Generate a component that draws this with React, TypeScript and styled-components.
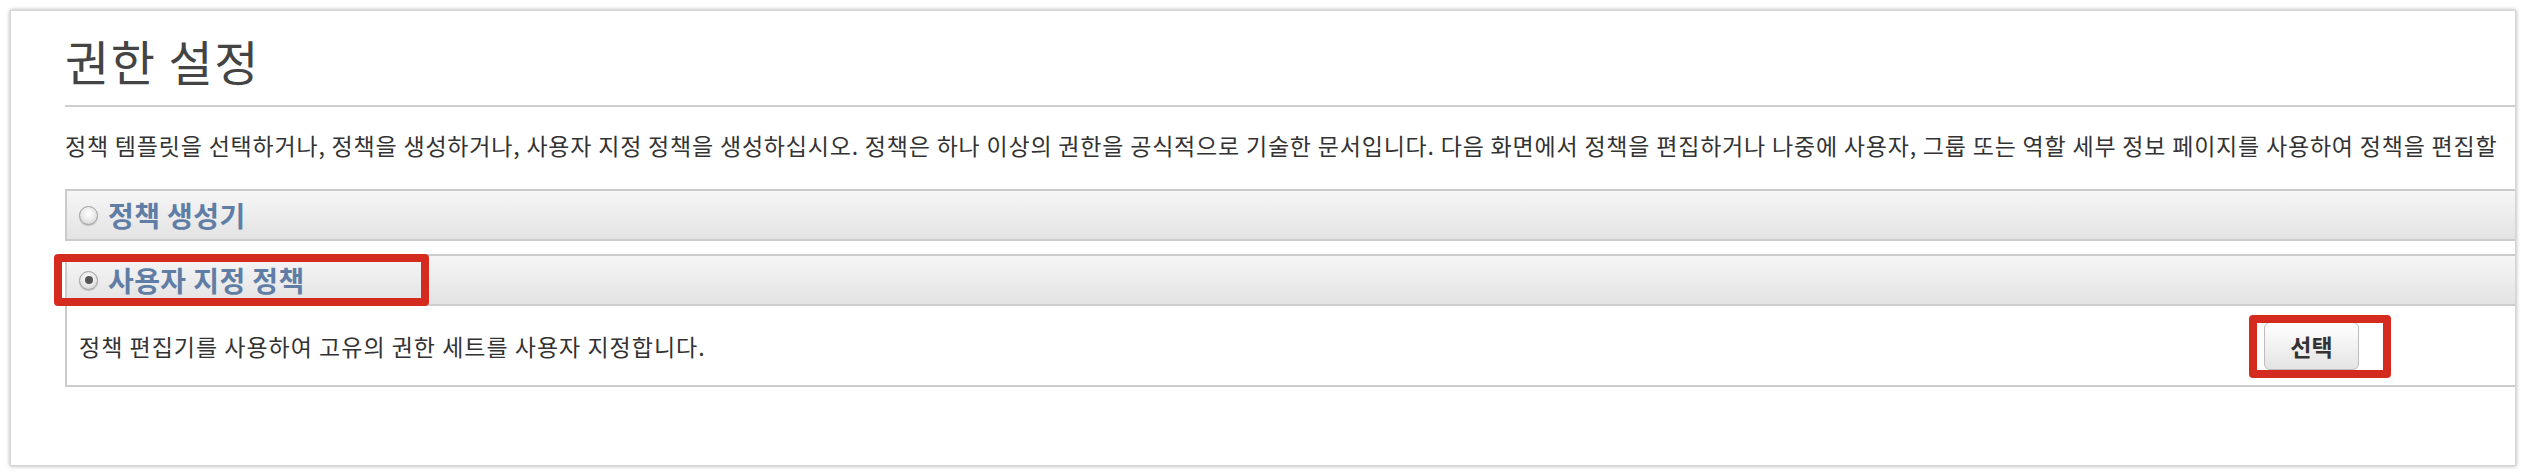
import React from "react";
import styled, { createGlobalStyle } from "styled-components";

const Global = createGlobalStyle`
  html, body { margin: 0; padding: 0; background: #ffffff; }
  body { font-family: "Noto Sans CJK KR", "Noto Sans", sans-serif; }
`;

const Card = styled.div`
  box-sizing: border-box;
  margin: 10px 8px 10px 10px;
  height: 456px;
  border: 1px solid #d6d6d6;
  box-shadow: 0 0 4px rgba(0, 0, 0, 0.35);
  background: #fff;
  padding: 0 0 0 54px;
  overflow: hidden;
  display: flex;
  flex-direction: column;
`;

const Title = styled.h1`
  margin: 23px 0 0 0;
  font-size: 48px;
  line-height: 52px;
  font-weight: 400;
  color: #444;
  letter-spacing: 1.5px;
`;

const Rule = styled.div`
  height: 2px;
  background: #cfcfcf;
  margin-top: 19px;
`;

const Description = styled.p`
  margin: 23px 0 0 0;
  font-size: 23px;
  line-height: 30px;
  color: #333;
  white-space: nowrap;
  letter-spacing: 0.8px;
`;

const Section = styled.div<{ $gap?: number }>`
  border: 2px solid #cbcbcb;
  margin-right: -10px;
  margin-top: ${(p) => p.$gap ?? 0}px;
  background: #fff;
`;

const Header = styled.div<{ $divider?: boolean }>`
  position: relative;
  height: 48px;
  display: flex;
  align-items: center;
  gap: 10px;
  padding-left: 12px;
  background: linear-gradient(#f6f6f6, #e3e3e3);
  border-bottom: ${(p) => (p.$divider ? "2px solid #cdcdcd" : "none")};
`;

const Radio = styled.span<{ $checked?: boolean }>`
  box-sizing: border-box;
  width: 19px;
  height: 19px;
  border-radius: 50%;
  border: 1px solid #a0a0a0;
  background: radial-gradient(circle at 50% 40%, #ffffff 0%, #ececec 45%, #cccccc 100%);
  box-shadow: 0 1px 1px rgba(0, 0, 0, 0.2);
  display: flex;
  align-items: center;
  justify-content: center;
  flex: none;
  &::after {
    content: "";
    display: ${(p) => (p.$checked ? "block" : "none")};
    width: 8px;
    height: 8px;
    border-radius: 50%;
    background: #555;
  }
`;

const HeaderText = styled.span`
  font-size: 28px;
  line-height: 1;
  font-weight: 700;
  color: #607da6;
  letter-spacing: 0.4px;
`;

const Body = styled.div`
  height: 79px;
  display: flex;
  align-items: center;
  justify-content: space-between;
  padding: 0 164px 0 12px;
`;

const BodyText = styled.span`
  font-size: 23px;
  line-height: 30px;
  color: #333;
  letter-spacing: 1px;
`;

const ButtonWrap = styled.span`
  position: relative;
  display: inline-flex;
`;

const Button = styled.button`
  width: 95px;
  height: 48px;
  border: 1px solid #bdbdbd;
  border-radius: 6px;
  background: linear-gradient(#ffffff, #e4e4e4);
  font-family: "Noto Sans CJK KR", sans-serif;
  font-size: 23px;
  font-weight: 700;
  color: #333;
  padding: 0;
  cursor: pointer;
`;

const Highlight = styled.span<{ $l: number; $t: number; $w: number; $h: number }>`
  position: absolute;
  box-sizing: border-box;
  left: ${(p) => p.$l}px;
  top: ${(p) => p.$t}px;
  width: ${(p) => p.$w}px;
  height: ${(p) => p.$h}px;
  border: 8px solid #d52b1f;
  border-radius: 4px;
  pointer-events: none;
`;

export default function App() {
  return (
    <>
      <Global />
      <Card>
        <Title>권한 설정</Title>
        <Rule />
        <Description>
          정책 템플릿을 선택하거나, 정책을 생성하거나, 사용자 지정 정책을 생성하십시오. 정책은 하나 이상의 권한을 공식적으로 기술한 문서입니다. 다음 화면에서 정책을 편집하거나 나중에 사용자, 그룹 또는 역할 세부 정보 페이지를 사용하여 정책을 편집할
        </Description>
        <Section $gap={29}>
          <Header>
            <Radio />
            <HeaderText>정책 생성기</HeaderText>
          </Header>
        </Section>
        <Section $gap={13}>
          <Header $divider>
            <Radio $checked />
            <HeaderText>사용자 지정 정책</HeaderText>
            <Highlight $l={-13} $t={-2} $w={375} $h={52} />
          </Header>
          <Body>
            <BodyText>정책 편집기를 사용하여 고유의 권한 세트를 사용자 지정합니다.</BodyText>
            <ButtonWrap>
              <Button>선택</Button>
              <Highlight $l={-15} $t={-7} $w={142} $h={63} />
            </ButtonWrap>
          </Body>
        </Section>
      </Card>
    </>
  );
}
